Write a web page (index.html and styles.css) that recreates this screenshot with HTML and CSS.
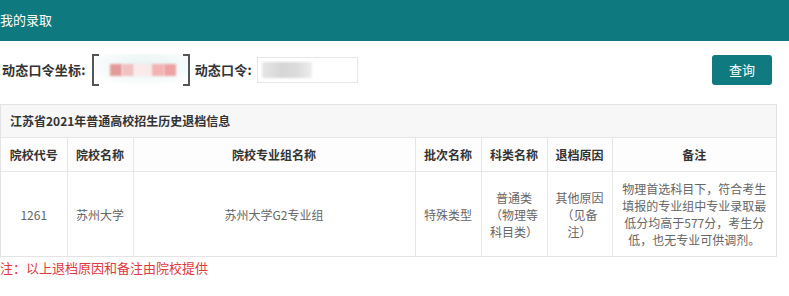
FILE: index.html
```html
<!DOCTYPE html>
<html lang="zh-CN">
<head>
<meta charset="utf-8">
<title>我的录取</title>
<link rel="stylesheet" href="styles.css">
</head>
<body>
<div class="topbar">我的录取</div>
<div class="toolbar">
  <span class="label">动态口令坐标:</span>
  <div class="coord">
    <span class="rb"></span>
    <span class="blk b1"></span><span class="blk b2"></span><span class="blk b3"></span><span class="blk b4"></span><span class="blk b5"></span>
  </div>
  <span class="label label2">动态口令:</span>
  <div class="code"><span class="codeblur"></span></div>
  <button class="btn">查询</button>
</div>
<div class="panel">
  <div class="panel-title">江苏省2021年普通高校招生历史退档信息</div>
  <table class="grid">
    <colgroup>
      <col class="c1"><col class="c2"><col class="c3"><col class="c4"><col class="c5"><col class="c6"><col class="c7">
    </colgroup>
    <thead>
      <tr>
        <th>院校代号</th><th>院校名称</th><th>院校专业组名称</th><th>批次名称</th><th>科类名称</th><th>退档原因</th><th>备注</th>
      </tr>
    </thead>
    <tbody>
      <tr>
        <td>1261</td>
        <td>苏州大学</td>
        <td>苏州大学G2专业组</td>
        <td>特殊类型</td>
        <td>普通类（物理等科目类）</td>
        <td>其他原因（见备注）</td>
        <td>物理首选科目下，符合考生填报的专业组中专业录取最低分均高于577分，考生分低，也无专业可供调剂。</td>
      </tr>
    </tbody>
  </table>
</div>
<p class="note">注：以上退档原因和备注由院校提供</p>
</body>
</html>
```

FILE: styles.css
```css
html, body {
  margin: 0;
  padding: 0;
  background: #fff;
  font-family: "Noto Sans CJK SC", "Noto Sans", sans-serif;
  color: #333;
}

.topbar {
  height: 41px;
  line-height: 40px;
  background: #0e7a80;
  color: #fff;
  font-size: 13px;
}

.toolbar {
  display: flex;
  align-items: center;
  height: 33px;
  margin-top: 12px;
  padding: 0 17px 0 2px;
}

.label {
  font-size: 13px;
  font-weight: bold;
  color: #333;
  line-height: 20px;
  letter-spacing: 0.2px;
}

.coord {
  position: relative;
  width: 98px;
  height: 32px;
  margin-left: 6px;
  border-left: 2px solid #555;
  border-right: 2px solid #555;
  background: radial-gradient(ellipse 60px 22px at 55% 35%, #e9f3f3 0%, #f6fafa 70%, #fff 100%);
  display: flex;
  align-items: center;
  padding-left: 12px;
  box-sizing: border-box;
}

.coord::before,
.coord::after {
  content: "";
  position: absolute;
  left: 0;
  width: 5px;
  height: 2px;
  background: #555;
}
.coord::before { top: 0; }
.coord::after { bottom: 0; }

.rb {
  position: absolute;
  right: 0;
  top: 0;
  bottom: 0;
  width: 5px;
  border-top: 2px solid #555;
  border-bottom: 2px solid #555;
}

.blk {
  display: inline-block;
  height: 12px;
  width: 12px;
  filter: blur(1px);
}
.b1 { background: #e59a9a; margin-left: 4px; }
.b2 { background: #f0c2c2; }
.b3 { background: #faeaea; width: 18px; }
.b4 { background: #f3b3b3; }
.b5 { background: #eea3a3; }

.label2 {
  margin-left: 5px;
}

.code {
  position: relative;
  width: 101px;
  height: 26px;
  box-sizing: border-box;
  border: 1px solid #e6e6e6;
  margin-left: 5px;
  display: flex;
  align-items: center;
  padding-left: 4px;
}

.codeblur {
  display: block;
  width: 50px;
  height: 16px;
  background: linear-gradient(90deg, #e6e6e6, #d6d6d6 40%, #dcdcdc 70%, #eee);
  filter: blur(0.8px);
}

.btn {
  margin-left: auto;
  width: 60px;
  height: 30px;
  border: none;
  border-radius: 3px;
  background: #0f7b81;
  color: #fff;
  font-family: "Noto Sans CJK SC", sans-serif;
  font-size: 13px;
  padding: 0;
  cursor: pointer;
}

.panel {
  margin-top: 18px;
  width: 777px;
  box-sizing: border-box;
  border: 1px solid #e3e3e3;
}

.panel-title {
  height: 32px;
  line-height: 32px;
  padding-left: 9px;
  background: #f7f7f7;
  font-size: 12px;
  font-weight: bold;
  color: #333;
  border-bottom: 1px solid #e6e6e6;
}

.grid {
  width: 100%;
  border-collapse: collapse;
  table-layout: fixed;
  font-size: 12px;
}

.c1 { width: 66px; }
.c2 { width: 66px; }
.c3 { width: 282px; }
.c4 { width: 66px; }
.c5 { width: 66px; }
.c6 { width: 65px; }
.c7 { width: auto; }

.grid th,
.grid td {
  border-left: 1px solid #e6e6e6;
  text-align: center;
  vertical-align: middle;
  padding: 8px 8px;
  line-height: 17px;
}
.grid th:first-child,
.grid td:first-child {
  border-left: none;
}

.grid th {
  font-weight: bold;
  color: #333;
  background: #fdfdfd;
  border-bottom: 1px solid #e6e6e6;
}

.grid td {
  color: #666;
  background: #fff;
}

.note {
  margin: 1px 0 0 0;
  font-size: 13px;
  line-height: 20px;
  color: #e0393e;
}
```
